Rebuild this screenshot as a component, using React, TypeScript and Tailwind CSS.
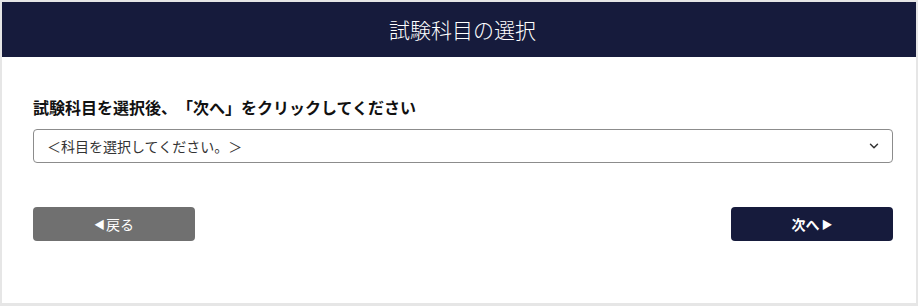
import { ChevronDown } from 'lucide-react';

export default function App() {
  return (
    <div className="min-h-[306px] w-[918px] bg-[#e6e6e6] pt-[2px] pl-[2px] pr-[2px] pb-[3px] [text-spacing-trim:space-all]" style={{ fontFamily: '"Noto Sans CJK JP", "Noto Sans", sans-serif' }}>
      <div className="w-[914px] h-[301px] bg-white">
        <div className="h-[55px] bg-[#161b3c] flex items-center justify-center pl-[7px]">
          <h1 className="text-white text-[21px] font-light tracking-normal">試験科目の選択</h1>
        </div>
        <div className="pl-[31px] pr-[23px] pt-[38px]">
          <p className="text-[16px] font-bold text-[#111] leading-6 mb-[10px]">試験科目を選択後、「次へ」をクリックしてください</p>
          <div className="h-[34px] border border-[#8c8c8c] rounded-[4px] flex items-center justify-between pl-[13px] pr-[11px]">
            <span className="text-[14px] text-[#333]">＜科目を選択してください。＞</span>
            <ChevronDown size={14} strokeWidth={2.5} className="text-[#333]" />
          </div>
          <div className="flex justify-between mt-[44px]">
            <button className="w-[162px] h-[34px] rounded-[4px] bg-[#707070] text-white text-[14px] flex items-center justify-center">
              <span className="text-[11px] mr-[1px]">◀</span>戻る
            </button>
            <button className="w-[162px] h-[34px] rounded-[4px] bg-[#161b3c] text-white text-[14px] font-bold flex items-center justify-center">
              次へ<span className="text-[11px] ml-[2px]">▶</span>
            </button>
          </div>
        </div>
      </div>
    </div>
  );
}
